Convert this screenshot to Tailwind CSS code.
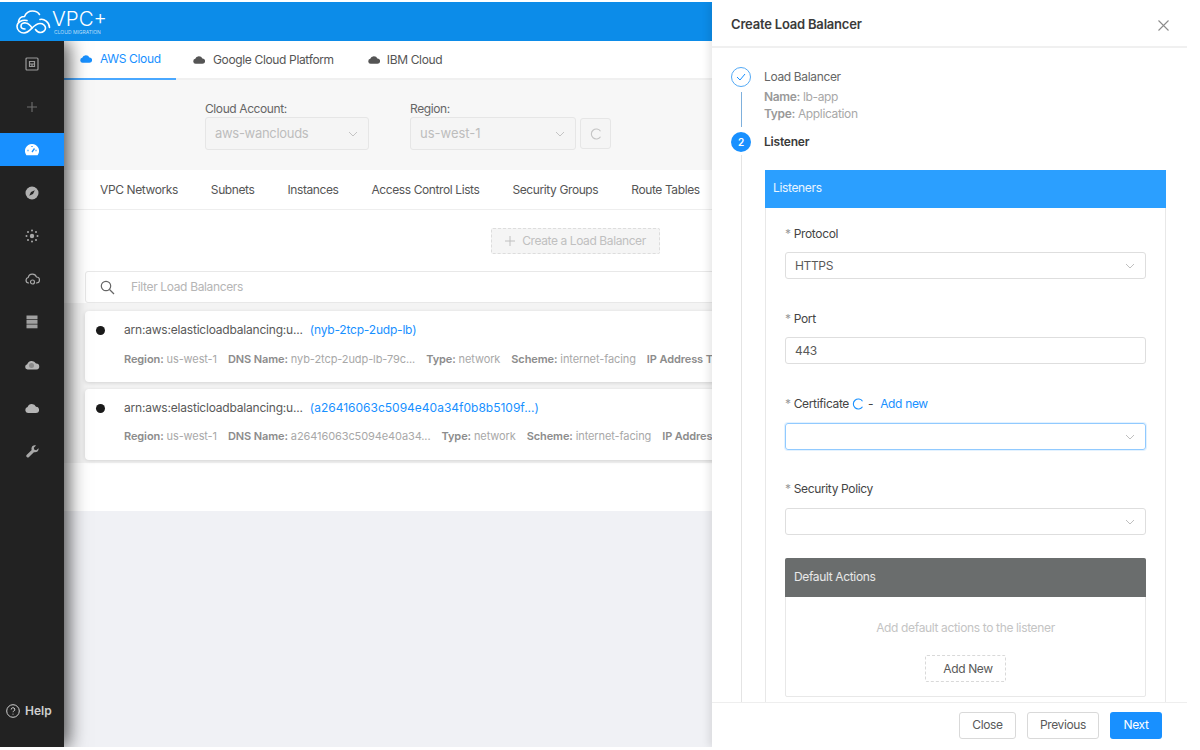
<!DOCTYPE html>
<html lang="en">
  <head>
    <meta charset="UTF-8" />
    <title>Create Load Balancer</title>
    <script src="https://cdn.jsdelivr.net/npm/@tailwindcss/browser@4"></script>
  </head>

  <body class="bg-white font-['Inter',sans-serif] overflow-hidden">
    <div class="relative w-[1187px] h-[745px] mt-[2px] flex flex-col overflow-hidden tracking-[-0.35px]">
      <!-- Header -->
      <header class="h-[39px] shrink-0 bg-[#0c8ce9] flex items-center pl-[16px] text-white">
        <svg width="35" height="24" viewBox="0 0 35 24" fill="none" stroke="white" stroke-width="1.600" stroke-linecap="round">
          <path d="M2.500 11.500C3 8.500 5.500 6.500 8.500 6.500 10 3 13 1 16.500 1c3 0 5.500 1 7 3.500" />
          <path d="M11 10.500C6 9.500 1 12 1 16.500 1 20.500 4.500 23 8 23c6.500 0 9-9.500 16-9.500 3 0 5.500 2 5.500 4.500S27 22.500 24.500 22.500c-2.500 0-4-1.500-5-3" />
          <path d="M9 19c-2 0-4-1-4-3 0-2.500 2.500-3.500 5-3 3 .5 4.500 2.500 6 5M24 9.500c4-1 9.500 2.500 9.500 8" />
        </svg>
        <div class="ml-[1px] mt-[1px] flex flex-col">
          <span class="text-[20.500px] font-light leading-[18px] tracking-normal">VPC+</span>
          <span class="text-[5px] leading-[6px] ml-[2px] mt-[1px] tracking-normal text-white/70">CLOUD MIGRATION</span>
        </div>
      </header>

      <div class="flex-1 flex min-h-0 overflow-hidden">
        <!-- Side nav -->
        <aside class="relative z-10 w-[64px] shrink-0 pt-px bg-[#222222] flex flex-col shadow-[4px_0_18px_rgba(0,0,0,0.7)] text-[#a8a8a8]">
          <div class="h-[43.100px] flex items-center justify-center">
            <svg width="14" height="14" viewBox="0 0 14 14" fill="none" stroke="#999999" stroke-width="1.200">
              <rect x="1" y="1" width="12" height="12" rx="1" />
              <path d="M4.500 4.500h5v5h-5zM4.500 7h5M7 7v2.500" />
            </svg>
          </div>
          <div class="h-[43.100px] flex items-center justify-center">
            <svg width="12" height="12" viewBox="0 0 12 12" stroke="#6f6f6f" stroke-width="1.100"><path d="M6 1v10M1 6h10" /></svg>
          </div>
          <div class="h-[43.100px] flex items-center">
            <div class="h-[33px] w-full bg-[#1890ff] flex items-center justify-center">
              <svg width="14" height="12" viewBox="0 0 14 12">
                <path fill="white" d="M7 0a7 7 0 0 1 5.600 11.200H1.400A7 7 0 0 1 7 0z" />
                <path stroke="#1890ff" stroke-width="1.300" d="M7 8l2.500-3.500M2.500 6.500h1M10.500 6.500h1M7 2v1" />
              </svg>
            </div>
          </div>
          <div class="h-[43.100px] flex items-center justify-center">
            <svg width="14" height="14" viewBox="0 0 14 14">
              <circle cx="7" cy="7" r="6.500" fill="#b0b0b0" />
              <path d="M9.800 4.200 8 8 4.200 9.800 6 6z" fill="#222222" />
            </svg>
          </div>
          <div class="h-[43.100px] flex items-center justify-center">
            <svg width="14" height="14" viewBox="0 0 14 14" fill="currentColor">
              <circle cx="7" cy="7" r="2.200" />
              <circle cx="7" cy="1.500" r="1" /><circle cx="7" cy="12.500" r="1" />
              <circle cx="1.500" cy="7" r="1" /><circle cx="12.500" cy="7" r="1" />
              <circle cx="3" cy="3" r="1" /><circle cx="11" cy="3" r="1" />
              <circle cx="3" cy="11" r="1" /><circle cx="11" cy="11" r="1" />
            </svg>
          </div>
          <div class="h-[43.100px] flex items-center justify-center">
            <svg width="15" height="13" viewBox="0 0 15 13" fill="none" stroke="currentColor" stroke-width="1.200">
              <path d="M4 10H3.500a2.800 2.800 0 0 1-.3-5.500A4.300 4.300 0 0 1 11.500 4a3 3 0 0 1 0 6H11" />
              <circle cx="7.500" cy="9" r="2" />
            </svg>
          </div>
          <div class="h-[43.100px] flex items-center justify-center">
            <svg width="12" height="14" viewBox="0 0 12 14" fill="#a0a0a0">
              <rect x="0.500" y="0.500" width="11" height="3.800" /><rect x="0.500" y="5" width="11" height="3.800" /><rect x="0.500" y="9.500" width="11" height="3.800" />
            </svg>
          </div>
          <div class="h-[43.100px] flex items-center justify-center">
            <svg width="16" height="12" viewBox="0 0 16 12">
              <path fill="#b5b5b5" d="M3.500 10.500a2.700 2.700 0 0 1-.3-5.300A4.800 4.800 0 0 1 12 4.500a3 3 0 0 1 .5 6z" />
              <circle cx="7.500" cy="6.500" r="2.500" fill="#8a8a8a" />
            </svg>
          </div>
          <div class="h-[43.100px] flex items-center justify-center">
            <svg width="14" height="10" viewBox="0 0 14 10">
              <path fill="#b5b5b5" d="M3 10a3 3 0 0 1-.4-5.900A4.500 4.500 0 0 1 11 3.800 3.100 3.100 0 0 1 11 10z" />
            </svg>
          </div>
          <div class="h-[43.100px] flex items-center justify-center">
            <svg width="13" height="13" viewBox="0 0 13 13">
              <path fill="#a8a8a8" d="M12.500 3.200 10.300 5.200 8.300 4.700 7.800 2.700 10 .6C8-.2 5.700 1 5.500 3.200c-.1.700 0 1.300.2 1.800L.8 9.800a1.500 1.500 0 0 0 2.200 2.200L7.900 7.200c2.500.8 5.300-1.300 4.600-4z" />
            </svg>
          </div>
          <div class="mt-auto mb-[27px] flex items-center pl-[6px] gap-[5px] text-[#cfcfcf] text-[12px] font-semibold tracking-normal">
            <svg width="14" height="14" viewBox="0 0 14 14" fill="none" stroke="#cfcfcf" stroke-width="1">
              <circle cx="7" cy="7" r="6.300" />
              <path d="M5.200 5.500A1.800 1.800 0 1 1 7.600 7.200c-.5.200-.6.500-.6 1" />
              <path d="M7 9.700v.9" />
            </svg>
            Help
          </div>
        </aside>

        <!-- Content -->
        <main class="flex-1 min-w-0 bg-[#f0f1f5] overflow-hidden">
          <div class="bg-white h-[39px] flex text-[12px] border-b-2 border-[#f0f0f0]">
            <div class="h-[39px] w-[112px] pl-[16px] pb-[2px] flex items-center gap-[8px] text-[#1890ff] border-b-2 border-[#4aa8ff]">
              <svg width="12" height="8" viewBox="0 0 14 9"><path fill="#1890ff" d="M3 9a3 3 0 0 1-.4-5.900A4.500 4.500 0 0 1 11 2.800 3.100 3.100 0 0 1 11 9z" /></svg>
              AWS Cloud
            </div>
            <div class="h-[37px] ml-[17px] flex items-center gap-[8px] text-[#555555]">
              <svg width="12" height="8" viewBox="0 0 14 9"><path fill="#555555" d="M3 9a3 3 0 0 1-.4-5.900A4.500 4.500 0 0 1 11 2.800 3.100 3.100 0 0 1 11 9z" /></svg>
              Google Cloud Platform
            </div>
            <div class="h-[37px] ml-[34px] flex items-center gap-[7px] text-[#555555]">
              <svg width="12" height="8" viewBox="0 0 14 9"><path fill="#555555" d="M3 9a3 3 0 0 1-.4-5.900A4.500 4.500 0 0 1 11 2.800 3.100 3.100 0 0 1 11 9z" /></svg>
              IBM Cloud
            </div>
          </div>

          <div class="h-[90px] bg-[#f7f7f7] flex pl-[141px] pt-[20px] gap-[41px] text-[12px] tracking-[-0.4px]">
            <div class="w-[164px]">
              <div class="text-[#666666] leading-[16px] pt-px h-[17px]">Cloud Account:</div>
              <div class="h-[33px] border border-[#e6e6e6] rounded-[3px] bg-[#f5f5f5] flex items-center justify-between pl-[9px] pr-[10px] text-[13px] tracking-[-0.3px] text-[#bdbdbd]">
                aws-wanclouds
                <svg width="10" height="6" viewBox="0 0 10 6" fill="none" stroke="#c4c4c4"><path d="m1 1 4 4 4-4" /></svg>
              </div>
            </div>
            <div>
              <div class="text-[#666666] leading-[16px] pt-px h-[17px]">Region:</div>
              <div class="flex gap-[4px] items-center">
                <div class="w-[166px] h-[33px] border border-[#e6e6e6] rounded-[3px] bg-[#f5f5f5] flex items-center justify-between pl-[9px] pr-[10px] text-[13px] tracking-normal text-[#bdbdbd]">
                  us-west-1
                  <svg width="10" height="6" viewBox="0 0 10 6" fill="none" stroke="#c4c4c4"><path d="m1 1 4 4 4-4" /></svg>
                </div>
                <div class="w-[31px] h-[31px] border border-[#e6e6e6] rounded-[3px] bg-[#f5f5f5] flex items-center justify-center">
                  <svg width="12" height="12" viewBox="0 0 12 12" fill="none" stroke="#c4c4c4" stroke-width="1.100"><path d="M10.500 3.200A5 5 0 1 0 10.500 8.800" /></svg>
                </div>
              </div>
            </div>
          </div>

          <div class="h-[40px] bg-white border-b border-[#eeeeee] flex items-center pl-[36px] gap-[33px] text-[12px] tracking-[-0.4px] text-[#555555] whitespace-nowrap">
            <span>VPC Networks</span>
            <span>Subnets</span>
            <span>Instances</span>
            <span>Access Control Lists</span>
            <span>Security Groups</span>
            <span>Route Tables</span>
          </div>

          <div class="bg-white h-[301px]">
            <div class="h-[61px] pt-[18px] pl-[427px]">
              <div class="w-[169px] h-[26px] border border-dashed border-[#dddddd] rounded-[2px] bg-[#f5f5f5] flex items-center justify-center gap-[7px] text-[12px] tracking-[-0.4px] text-[#c0c0c0]">
                <svg width="10" height="10" viewBox="0 0 10 10" stroke="#c0c0c0"><path d="M5 0v10M0 5h10" /></svg>
                Create a Load Balancer
              </div>
            </div>
            <div class="ml-[21px] w-[700px] h-[32px] border border-[#e8e8e8] rounded-[3px] flex items-center pl-[14px] text-[12px] text-[#b5b5b5]">
              <svg width="15" height="15" viewBox="0 0 15 15" fill="none" stroke="#666666" stroke-width="1.200"><circle cx="6" cy="6" r="4.700" /><path d="m9.500 9.500 4.500 4.500" /></svg>
              <span class="ml-[16px]">Filter Load Balancers</span>
            </div>
            <div class="pl-[21px] pt-[8px] pb-[3px] bg-[#f4f4f4] w-[800px]">
              <div class="w-[700px] h-[71px] bg-white rounded-[4px] shadow-[0_1px_4px_rgba(0,0,0,0.14)] pl-[11px] pt-[11px] whitespace-nowrap overflow-hidden">
                <div class="flex items-center h-[16px] text-[12px] tracking-[-0.2px] text-[#595959]">
                  <span class="w-[9px] h-[9px] rounded-full bg-[#1a1a1a] mr-[19px]"></span>
                  <span>arn:aws:elasticloadbalancing:u...</span>
                  <span class="ml-[7px] text-[#1890ff]">(nyb-2tcp-2udp-lb)</span>
                </div>
                <div class="flex gap-[11px] mt-[13px] pl-[28px] text-[11px] tracking-[-0.1px] text-[#a8a8a8]">
                  <span><b class="font-semibold text-[#8c8c8c]">Region:</b> us-west-1</span>
                  <span><b class="font-semibold text-[#8c8c8c]">DNS Name:</b> nyb-2tcp-2udp-lb-79c...</span>
                  <span><b class="font-semibold text-[#8c8c8c]">Type:</b> network</span>
                  <span><b class="font-semibold text-[#8c8c8c]">Scheme:</b> internet-facing</span>
                  <span><b class="font-semibold text-[#8c8c8c]">IP Address Type:</b> ipv4</span>
                </div>
              </div>
              <div class="w-[700px] h-[71px] mt-[7px] bg-white rounded-[4px] shadow-[0_1px_4px_rgba(0,0,0,0.14)] pl-[11px] pt-[11px] whitespace-nowrap overflow-hidden">
                <div class="flex items-center h-[16px] text-[12px] tracking-[-0.2px] text-[#595959]">
                  <span class="w-[9px] h-[9px] rounded-full bg-[#1a1a1a] mr-[19px]"></span>
                  <span>arn:aws:elasticloadbalancing:u...</span>
                  <span class="ml-[7px] tracking-normal text-[#1890ff]">(a26416063c5094e40a34f0b8b5109f...)</span>
                </div>
                <div class="flex gap-[11px] mt-[12px] pl-[28px] text-[11px] tracking-[-0.1px] text-[#a8a8a8]">
                  <span><b class="font-semibold text-[#8c8c8c]">Region:</b> us-west-1</span>
                  <span><b class="font-semibold text-[#8c8c8c]">DNS Name:</b> a26416063c5094e40a34...</span>
                  <span><b class="font-semibold text-[#8c8c8c]">Type:</b> network</span>
                  <span><b class="font-semibold text-[#8c8c8c]">Scheme:</b> internet-facing</span>
                  <span><b class="font-semibold text-[#8c8c8c]">IP Address Type:</b> ipv4</span>
                </div>
              </div>
            </div>
          </div>
        </main>
      </div>

      <!-- Drawer, lies over the content -->
      <section class="absolute top-0 bottom-0 left-[712px] w-[475px] z-20 bg-white flex flex-col shadow-[-3px_0_8px_rgba(0,0,0,0.10)]">
        <div class="h-[46px] pt-[2px] shrink-0 border-b-2 border-[#f0f0f0] flex items-center justify-between pl-[19px] pr-[18px]">
          <span class="text-[13px] font-semibold tracking-[-0.2px] text-[#3a3a3a]">Create Load Balancer</span>
          <svg width="11" height="11" viewBox="0 0 11 11" stroke="#8c8c8c" stroke-width="1.100"><path d="m.5.500 10 10M10.500.500l-10 10" /></svg>
        </div>

        <div class="flex-1 min-h-0 overflow-hidden pl-[19px] pr-[21px] pt-[19px]">
          <!-- Step 1 -->
          <div class="flex gap-[13px] h-[65px]">
            <div class="w-[20px] flex flex-col items-center">
              <div class="w-[20px] h-[20px] shrink-0 rounded-full border border-[#53a9f5] flex items-center justify-center">
                <svg width="10" height="8" viewBox="0 0 10 8" fill="none" stroke="#1890ff"><path d="m1 4 3 3 5-6" /></svg>
              </div>
              <div class="w-px h-[35px] mt-[5px] bg-[#7fb0dc]"></div>
            </div>
            <div class="text-[12px] leading-[17px] text-[#a8a8a8]">
              <div class="text-[#666666] leading-[20px]">Load Balancer</div>
              <div class="mt-px"><b class="font-semibold text-[#999999]">Name:</b> lb-app</div>
              <div><b class="font-semibold text-[#999999]">Type:</b> Application</div>
            </div>
          </div>

          <!-- Step 2 -->
          <div class="flex gap-[13px]">
            <div class="w-[20px] flex flex-col items-center">
              <div class="w-[20px] h-[20px] shrink-0 rounded-full bg-[#1890ff] text-white text-[10px] font-semibold flex items-center justify-center">2</div>
              <div class="w-px h-[560px] mt-[3px] bg-[#e4e4e4]"></div>
            </div>
            <div class="flex-1 min-w-0">
              <div class="h-[20px] flex items-center text-[12px] font-semibold tracking-[-0.2px] text-[#3a3a3a]">Listener</div>
              <div class="mt-[18px] ml-px border-x border-[#e8e8e8] h-[600px]">
                <div class="h-[38px] pb-[2px] -mx-px bg-[#2b9fff] text-white/90 text-[12px] flex items-center pl-[8px]">Listeners</div>
                <div class="px-[19px] text-[12px] text-[#444444]">
                  <div class="pt-[18px] h-[85px]">
                    <div class="h-[16px] leading-[16px]"><span class="text-[#999999]">*</span> Protocol</div>
                    <div class="mt-[10px] h-[27px] border border-[#dedede] rounded-[3px] flex items-center justify-between pl-[9px] pr-[10px] text-[#595959]">
                      HTTPS
                      <svg width="10" height="6" viewBox="0 0 10 6" fill="none" stroke="#bfbfbf"><path d="m1 1 4 4 4-4" /></svg>
                    </div>
                  </div>
                  <div class="pt-[18px] h-[85px]">
                    <div class="h-[16px] leading-[16px]"><span class="text-[#999999]">*</span> Port</div>
                    <div class="mt-[10px] h-[27px] border border-[#dedede] rounded-[3px] flex items-center pl-[9px] text-[#595959]">443</div>
                  </div>
                  <div class="pt-[18px] h-[86px]">
                    <div class="h-[16px] leading-[16px] flex items-center gap-[3px]">
                      <span><span class="text-[#999999]">*</span> Certificate</span>
                      <svg width="12" height="12" viewBox="0 0 12 12" fill="none" stroke="#1890ff" stroke-width="1.100"><path d="M10.500 3.200A5 5 0 1 0 10.500 8.800" /></svg>
                      <span class="ml-[1px]">-</span>
                      <span class="ml-[4px] text-[#1890ff]">Add new</span>
                    </div>
                    <div class="mt-[11px] h-[27px] border border-[#91caff] rounded-[3px] shadow-[0_0_0_1px_rgba(24,144,255,0.12)] flex items-center justify-end pr-[10px]">
                      <svg width="10" height="6" viewBox="0 0 10 6" fill="none" stroke="#bfbfbf"><path d="m1 1 4 4 4-4" /></svg>
                    </div>
                  </div>
                  <div class="pt-[17px] h-[85px]">
                    <div class="h-[16px] leading-[16px]"><span class="text-[#999999]">*</span> Security Policy</div>
                    <div class="mt-[11px] h-[27px] border border-[#dedede] rounded-[3px] flex items-center justify-end pr-[10px]">
                      <svg width="10" height="6" viewBox="0 0 10 6" fill="none" stroke="#bfbfbf"><path d="m1 1 4 4 4-4" /></svg>
                    </div>
                  </div>
                  <div class="mt-[9px] h-[139px] border border-[#e8e8e8] rounded-[2px] flex flex-col">
                    <div class="h-[39px] pb-[2px] -mx-px -mt-px shrink-0 bg-[#6a6d6d] text-white/85 flex items-center pl-[9px] rounded-t-[2px]">Default Actions</div>
                    <div class="text-center text-[#c4c4c4] mt-[23px] leading-[16px]">Add default actions to the listener</div>
                    <div class="mt-[19px] ml-[139px] w-[81px] h-[27px] pl-[5px] border border-dashed border-[#d9d9d9] rounded-[2px] flex items-center justify-center text-[#595959]">Add New</div>
                  </div>
                </div>
              </div>
            </div>
          </div>
        </div>

        <div class="h-[45px] shrink-0 border-t border-[#eeeeee] bg-white flex items-center justify-end gap-[11px] pr-[25px] text-[12px] text-[#595959]">
          <button class="w-[57px] h-[27px] border border-[#d9d9d9] rounded-[3px] bg-white">Close</button>
          <button class="w-[72px] h-[27px] border border-[#d9d9d9] rounded-[3px] bg-white">Previous</button>
          <button class="w-[52px] h-[27px] rounded-[3px] bg-[#1890ff] text-white">Next</button>
        </div>
      </section>
    </div>
  </body>
</html>
